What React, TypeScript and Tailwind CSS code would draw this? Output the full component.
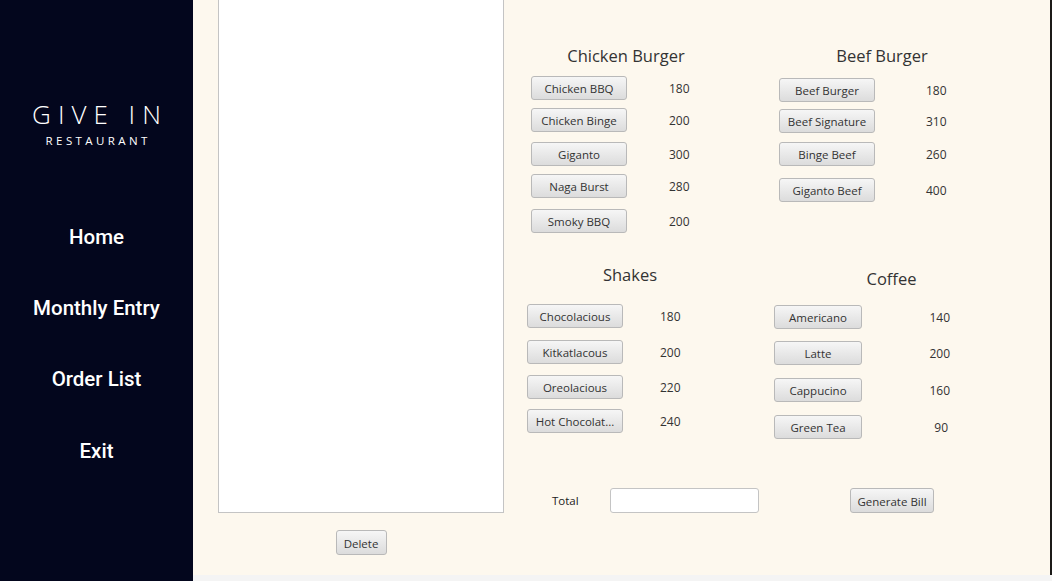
import React from "react";

const font = { fontFamily: '"Open Sans", "Noto Sans", sans-serif' };

function Btn({ label, w = "w-[96px]", extra = "" }: { label: string; w?: string; extra?: string }) {
  return (
    <div
      className={`${w} ${extra} h-[24px] pt-[2px] shrink-0 rounded-[3px] border border-[#b9b9b9] bg-gradient-to-b from-[#f6f6f6] to-[#dcdcdc] flex items-center justify-center text-[11.5px] text-[#333] whitespace-nowrap overflow-hidden`}
    >
      {label}
    </div>
  );
}

function Price({ v, cls }: { v: string; cls: string }) {
  return <div className={`${cls} h-[24px] text-[12px] text-[#333] leading-[26px]`}>{v}</div>;
}

const navCls = "text-[20.5px] font-medium leading-[28px]";
const navFont = { fontFamily: 'Roboto, "Open Sans", sans-serif' };

export default function App() {
  return (
    <div className="flex w-[1052px] h-[581px] overflow-hidden" style={font}>
      {/* Sidebar */}
      <div className="w-[193px] h-full bg-[#03061d] flex flex-col items-center text-white shrink-0">
        <div className="mt-[97px] text-[26px] font-light tracking-[7px] pl-[7px] leading-[34px]">GIVE IN</div>
        <div className="mt-[2px] text-[11.5px] tracking-[3.4px] pl-[3.4px] leading-[16px]">RESTAURANT</div>
        <div className={`mt-[74px] ${navCls}`} style={navFont}>Home</div>
        <div className={`mt-[43px] ${navCls}`} style={navFont}>Monthly Entry</div>
        <div className={`mt-[43px] ${navCls}`} style={navFont}>Order List</div>
        <div className={`mt-[44px] ${navCls}`} style={navFont}>Exit</div>
      </div>

      {/* Main */}
      <div className="flex-1 flex flex-col h-full">
        <div className="h-[575px] bg-[#fdf8ee] flex border-r-2 border-[#1c1a18]">
          {/* Left list column */}
          <div className="ml-[25px] w-[286px] flex flex-col items-center">
            <div className="w-full h-[513px] bg-white border-x border-b border-[#c4c4c4]" />
            <div className="mt-[17px]">
              <div className="w-[51px] h-[25px] pt-[2px] rounded-[3px] border border-[#b9b9b9] bg-gradient-to-b from-[#f6f6f6] to-[#dcdcdc] flex items-center justify-center text-[11.5px] text-[#333]">
                Delete
              </div>
            </div>
          </div>

          {/* Menu left column */}
          <div className="ml-[23px] w-[247px] flex flex-col">
            <div className="mt-[46px] w-[198px] h-[20px] leading-[20px] text-center text-[16.5px] text-[#333]">Chicken Burger</div>
            <div className="mt-[10px] flex"><Btn label="Chicken BBQ" extra="ml-[4px]" /><Price v="180" cls="ml-[42px]" /></div>
            <div className="mt-[8px] flex"><Btn label="Chicken Binge" extra="ml-[4px]" /><Price v="200" cls="ml-[42px]" /></div>
            <div className="mt-[10px] flex"><Btn label="Giganto" extra="ml-[4px]" /><Price v="300" cls="ml-[42px]" /></div>
            <div className="mt-[8px] flex"><Btn label="Naga Burst" extra="ml-[4px]" /><Price v="280" cls="ml-[42px]" /></div>
            <div className="mt-[11px] flex"><Btn label="Smoky BBQ" extra="ml-[4px]" /><Price v="200" cls="ml-[42px]" /></div>

            <div className="mt-[32px] w-[206px] h-[20px] leading-[20px] text-center text-[16.5px] text-[#333]">Shakes</div>
            <div className="mt-[19px] flex"><Btn label="Chocolacious" /><Price v="180" cls="ml-[37px]" /></div>
            <div className="mt-[12px] flex"><Btn label="Kitkatlacous" /><Price v="200" cls="ml-[37px]" /></div>
            <div className="mt-[11px] flex"><Btn label="Oreolacious" /><Price v="220" cls="ml-[37px]" /></div>
            <div className="mt-[10px] flex"><Btn label="Hot Chocolat..." /><Price v="240" cls="ml-[37px]" /></div>

            <div className="mt-[55px] flex items-center">
              <div className="ml-[25px] w-[58px] pt-[1px] text-[11.5px] text-[#222]">Total</div>
              <div className="w-[149px] h-[25px] bg-white border border-[#c4c4c4] rounded-[3px]" />
            </div>
          </div>

          {/* Menu right column */}
          <div className="w-[240px] flex flex-col">
            <div className="mt-[46px] w-[216px] h-[20px] leading-[20px] text-center text-[16.5px] text-[#333]">Beef Burger</div>
            <div className="mt-[12px] flex"><Btn label="Beef Burger" extra="ml-[5px]" /><Price v="180" cls="ml-[51px]" /></div>
            <div className="mt-[7px] flex"><Btn label="Beef Signature" extra="ml-[5px]" /><Price v="310" cls="ml-[51px]" /></div>
            <div className="mt-[9px] flex"><Btn label="Binge Beef" extra="ml-[5px]" /><Price v="260" cls="ml-[51px]" /></div>
            <div className="mt-[12px] flex"><Btn label="Giganto Beef" extra="ml-[5px]" /><Price v="400" cls="ml-[51px]" /></div>

            <div className="mt-[67px] w-[235px] h-[20px] leading-[20px] text-center text-[16.5px] text-[#333]">Coffee</div>
            <div className="mt-[16px] flex"><Btn label="Americano" w="w-[88px]" /><Price v="140" cls="w-[88px] text-right" /></div>
            <div className="mt-[12px] flex"><Btn label="Latte" w="w-[88px]" /><Price v="200" cls="w-[88px] text-right" /></div>
            <div className="mt-[13px] flex"><Btn label="Cappucino" w="w-[88px]" /><Price v="160" cls="w-[88px] text-right" /></div>
            <div className="mt-[13px] flex"><Btn label="Green Tea" w="w-[88px]" /><Price v="90" cls="w-[86px] text-right" /></div>

            <div className="mt-[49px] flex">
              <div className="ml-[76px] w-[84px] h-[25px] pt-[2px] rounded-[3px] border border-[#b9b9b9] bg-gradient-to-b from-[#f6f6f6] to-[#dcdcdc] flex items-center justify-center text-[11.5px] text-[#333] whitespace-nowrap">
                Generate Bill
              </div>
            </div>
          </div>
        </div>
        <div className="flex-1 bg-[#f4f4f4]" />
      </div>
    </div>
  );
}
